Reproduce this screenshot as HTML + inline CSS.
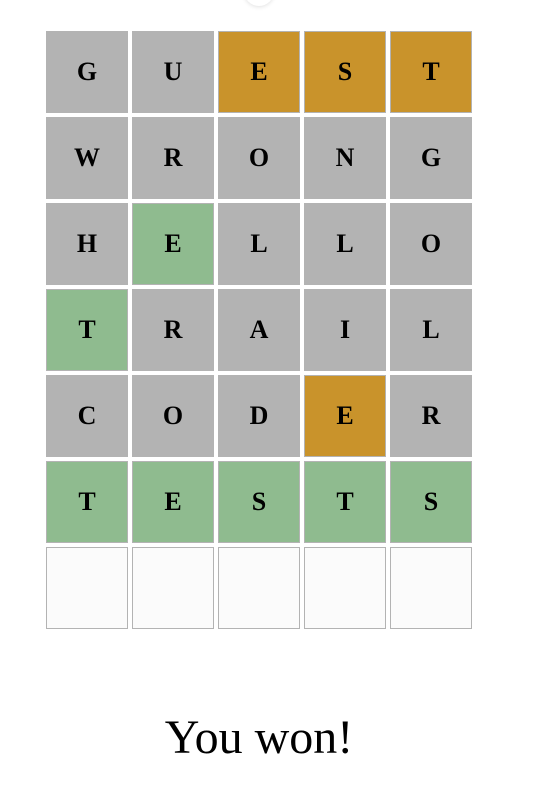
<!DOCTYPE html>
<html><head><style>
body{margin:0;width:538px;height:794px;background:#fff;position:relative;overflow:hidden;font-family:"Liberation Serif",serif}
.c{position:absolute;left:244px;top:-24px;width:30px;height:30px;border-radius:50%;background:#fff;box-shadow:0 1px 4px rgba(0,0,0,.12)}
.t{position:absolute;width:80px;height:80px;border:1px solid #b3b3b3;background:#b3b3b3;font-weight:bold;font-size:26px;line-height:80px;text-align:center;color:#000}
.o{background:#c9932b}.g{background:#8fbb8f}.e{background:#fbfbfb}
.w{position:absolute;top:710px;left:0;width:518px;text-align:center;font-size:48px}
</style></head><body>
<div class="c"></div>
<div id="b"></div>
<div class="w">You won!</div>
<script>
var rows=[["G","U","E","S","T"],["W","R","O","N","G"],["H","E","L","L","O"],["T","R","A","I","L"],["C","O","D","E","R"],["T","E","S","T","S"],["","","","",""]];
var cls=[["","","o","o","o"],["","","","",""],["","g","","",""],["g","","","",""],["","","","o",""],["g","g","g","g","g"],["e","e","e","e","e"]];
var h="";for(var r=0;r<7;r++)for(var c=0;c<5;c++)h+='<div class="t '+cls[r][c]+'" style="left:'+(46+c*86)+'px;top:'+(31+r*86)+'px">'+rows[r][c]+'</div>';
document.getElementById("b").innerHTML=h;
</script>
</body></html>
